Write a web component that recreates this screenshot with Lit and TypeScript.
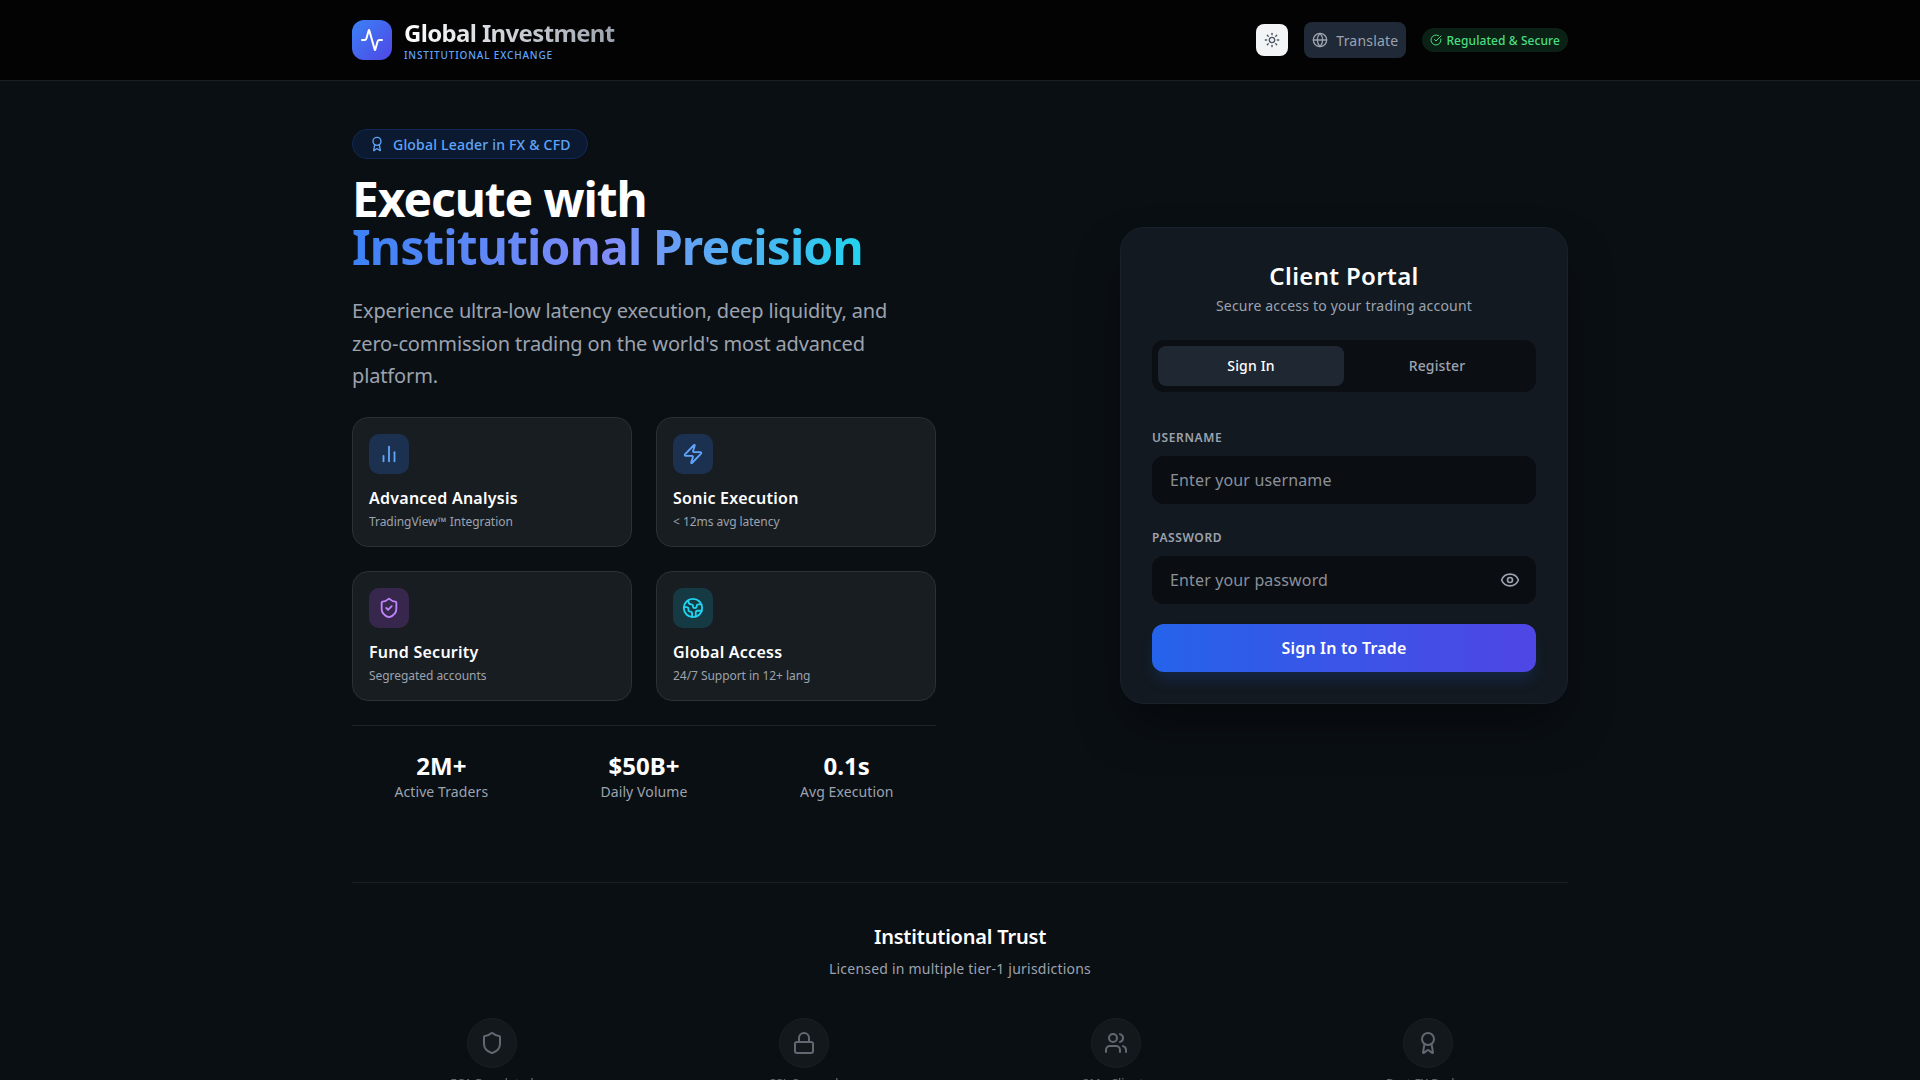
import { LitElement, html, css, svg } from "lit";
import { customElement } from "lit/decorators.js";

const ic = (size: number, body: unknown, cls = "", sw = 2) => html`<svg class=${cls} width=${size} height=${size} viewBox="0 0 24 24" fill="none" stroke="currentColor" stroke-width=${sw} stroke-linecap="round" stroke-linejoin="round">${body}</svg>`;

const I = {
  activity: svg`<path d="M22 12h-2.48a2 2 0 0 0-1.93 1.46l-2.35 8.36a.25.25 0 0 1-.48 0L9.24 2.18a.25.25 0 0 0-.48 0l-2.35 8.36A2 2 0 0 1 4.49 12H2"/>`,
  sun: svg`<circle cx="12" cy="12" r="4"/><path d="M12 2v2"/><path d="M12 20v2"/><path d="m4.93 4.93 1.41 1.41"/><path d="m17.66 17.66 1.41 1.41"/><path d="M2 12h2"/><path d="M20 12h2"/><path d="m6.34 17.66-1.41 1.41"/><path d="m19.07 4.93-1.41 1.41"/>`,
  globe: svg`<circle cx="12" cy="12" r="10"/><path d="M12 2a14.5 14.5 0 0 0 0 20 14.5 14.5 0 0 0 0-20"/><path d="M2 12h20"/>`,
  check: svg`<path d="M21.801 10A10 10 0 1 1 17 3.335"/><path d="m9 11 3 3L22 4"/>`,
  award: svg`<path d="m15.477 12.89 1.515 8.526a.5.5 0 0 1-.81.47l-3.58-2.687a1 1 0 0 0-1.197 0l-3.586 2.686a.5.5 0 0 1-.81-.469l1.514-8.526"/><circle cx="12" cy="8" r="6"/>`,
  chart: svg`<path d="M18 20V10"/><path d="M12 20V4"/><path d="M6 20v-6"/>`,
  zap: svg`<path d="M4 14a1 1 0 0 1-.78-1.63l9.9-10.2a.5.5 0 0 1 .86.46l-1.92 6.02A1 1 0 0 0 13 10h7a1 1 0 0 1 .78 1.63l-9.9 10.2a.5.5 0 0 1-.86-.46l1.92-6.02A1 1 0 0 0 11 14z"/>`,
  shieldCheck: svg`<path d="M20 13c0 5-3.5 7.5-7.66 8.95a1 1 0 0 1-.67-.01C7.5 20.5 4 18 4 13V6a1 1 0 0 1 1-1c2 0 4.5-1.2 6.24-2.72a1.17 1.17 0 0 1 1.52 0C14.51 3.81 17 5 19 5a1 1 0 0 1 1 1z"/><path d="m9 12 2 2 4-4"/>`,
  earth: svg`<path d="M21.54 15H17a2 2 0 0 0-2 2v4.54"/><path d="M7 3.34V5a3 3 0 0 0 3 3a2 2 0 0 1 2 2c0 1.1.9 2 2 2a2 2 0 0 0 2-2c0-1.1.9-2 2-2h3.17"/><path d="M11 21.95V18a2 2 0 0 0-2-2a2 2 0 0 1-2-2v-1a2 2 0 0 0-2-2H2.05"/><circle cx="12" cy="12" r="10"/>`,
  eye: svg`<path d="M2.062 12.348a1 1 0 0 1 0-.696 10.75 10.75 0 0 1 19.876 0 1 1 0 0 1 0 .696 10.75 10.75 0 0 1-19.876 0"/><circle cx="12" cy="12" r="3"/>`,
  shield: svg`<path d="M20 13c0 5-3.5 7.5-7.66 8.95a1 1 0 0 1-.67-.01C7.5 20.5 4 18 4 13V6a1 1 0 0 1 1-1c2 0 4.5-1.2 6.24-2.72a1.17 1.17 0 0 1 1.52 0C14.51 3.81 17 5 19 5a1 1 0 0 1 1 1z"/>`,
  lock: svg`<rect width="18" height="11" x="3" y="11" rx="2" ry="2"/><path d="M7 11V7a5 5 0 0 1 10 0v4"/>`,
  users: svg`<path d="M16 21v-2a4 4 0 0 0-4-4H6a4 4 0 0 0-4 4v2"/><circle cx="9" cy="7" r="4"/><path d="M22 21v-2a4 4 0 0 0-3-3.87"/><path d="M16 3.13a4 4 0 0 1 0 7.75"/>`,
};

const features = [
  { icon: I.chart, tone: "blue", title: "Advanced Analysis", sub: "TradingView™ Integration" },
  { icon: I.zap, tone: "blue", title: "Sonic Execution", sub: "< 12ms avg latency" },
  { icon: I.shieldCheck, tone: "purple", title: "Fund Security", sub: "Segregated accounts" },
  { icon: I.earth, tone: "cyan", title: "Global Access", sub: "24/7 Support in 12+ lang" },
];
const stats = [
  ["2M+", "Active Traders"],
  ["$50B+", "Daily Volume"],
  ["0.1s", "Avg Execution"],
];
const trust = [
  [I.shield, "FCA Regulated"],
  [I.lock, "SSL Secured"],
  [I.users, "2M+ Clients"],
  [I.award, "Best FX Broker"],
];

@customElement("app-root")
export class AppRoot extends LitElement {
  static styles = css`
    :host {
      display: block;
      height: 1080px;
      overflow: hidden;
      background: #0a0f14;
      color: #fff;
      font-family: "Noto Sans", sans-serif;
    }
    * { box-sizing: border-box; }
    svg { display: block; flex: none; }
    .wrap { width: 1216px; margin: 0 auto; }
    header { height: 81px; background: #030304; border-bottom: 1px solid #1c2026; }
    header .wrap { height: 80px; display: flex; align-items: center; justify-content: space-between; }
    .brand { display: flex; align-items: center; gap: 12px; }
    .logo {
      width: 40px; height: 40px; border-radius: 12px; color: #fff;
      background: linear-gradient(135deg, #3b82f6, #4f46e5);
      display: flex; align-items: center; justify-content: center;
    }
    .name {
      font-size: 24px; line-height: 28px; font-weight: 700; letter-spacing: -0.65px;
      background: linear-gradient(90deg, #fff, #9ca3af);
      -webkit-background-clip: text; background-clip: text; color: transparent;
    }
    .tag { font-size: 10px; line-height: 12px; letter-spacing: 0.83px; font-weight: 500; color: #60a5fa; margin-top: 2px; }
    .tools { display: flex; align-items: center; gap: 16px; }
    .theme {
      width: 32px; height: 32px; border: 0; padding: 0; border-radius: 8px; background: #f3f4f6; color: #4b5563;
      display: flex; align-items: center; justify-content: center;
    }
    .translate {
      height: 36px; border: 0; border-radius: 8px; padding: 0 8px; background: #1f2937; color: #9ca3af;
      display: flex; align-items: center; gap: 8px; font: 400 14px "Noto Sans", sans-serif; letter-spacing: 0.2px;
    }
    .reg {
      height: 24px; padding: 0 8px; border-radius: 999px; background: #0c2115; color: #4ade80;
      display: flex; align-items: center; gap: 4px; font-size: 12px; font-weight: 500; letter-spacing: 0.08px;
    }
    .hero { display: flex; justify-content: space-between; align-items: center; padding-top: 48px; }
    .left { width: 584px; }
    .badge {
      display: inline-flex; align-items: center; gap: 8px; height: 30px; padding: 0 16px; border-radius: 999px;
      background: #0b1a30; border: 1px solid #12295a; color: #60a5fa; font-size: 14px; font-weight: 500; letter-spacing: 0.2px;
    }
    h1 { margin: 16px 0 0; font-size: 48px; line-height: 48px; font-weight: 700; letter-spacing: -1.1px; }
    .grad {
      display: inline-block; letter-spacing: -0.87px;
      background: linear-gradient(90deg, #3b82f6, #818cf8 50%, #22d3ee);
      -webkit-background-clip: text; background-clip: text; color: transparent;
    }
    .lead { margin: 24px 0 0; font-size: 20px; line-height: 32.5px; color: #9ca3af; letter-spacing: -0.14px; }
    .features { display: grid; grid-template-columns: 1fr 1fr; gap: 24px; margin-top: 24px; }
    .feat { height: 130px; padding: 16px; border-radius: 16px; background: #181d21; border: 1px solid #2a3036; }
    .fi { width: 40px; height: 40px; border-radius: 10px; display: flex; align-items: center; justify-content: center; margin-bottom: 12px; }
    .fi.blue { background: #1c3050; color: #60a5fa; }
    .fi.purple { background: #37274c; color: #c084fc; }
    .fi.cyan { background: #163a44; color: #22d3ee; }
    .ft { font-size: 16px; line-height: 24px; font-weight: 600; letter-spacing: 0.25px; }
    .fs { font-size: 12px; line-height: 16px; color: #9ca3af; margin-top: 4px; letter-spacing: -0.05px; }
    .stats { display: grid; grid-template-columns: repeat(3, 1fr); gap: 24px; margin-top: 24px; padding-top: 24px; border-top: 1px solid #1f2429; text-align: center; }
    .sv { font-size: 24px; line-height: 32px; font-weight: 700; }
    .sl { font-size: 14px; line-height: 20px; color: #9ca3af; letter-spacing: 0.1px; }
    .portal {
      width: 448px; height: 477px; padding: 32px 31px; border-radius: 24px; background: #121920;
      border: 1px solid #18212c; box-shadow: 0 25px 50px -12px rgba(0,0,0,.5);
    }
    .portal h2 { margin: 0; text-align: center; font-size: 24px; line-height: 32px; font-weight: 600; letter-spacing: 0.35px; }
    .psub { text-align: center; font-size: 14px; line-height: 20px; color: #9ca3af; margin-top: 4px; letter-spacing: 0.2px; }
    .tabs { display: flex; height: 52px; padding: 6px; margin-top: 24px; border-radius: 12px; background: #0b0e12; }
    .tab { flex: 1; border: 0; border-radius: 8px; background: none; color: #9ca3af; font: 500 14px "Noto Sans", sans-serif; letter-spacing: 0.15px; }
    .tab.on { background: #1f2733; color: #fff; }
    label { display: block; font-size: 12px; line-height: 16px; font-weight: 600; letter-spacing: 0.6px; color: #9ca3af; margin-bottom: 10px; }
    .f1 { margin-top: 38px; }
    .f2 { margin-top: 26px; }
    .field { height: 48px; display: flex; align-items: center; border-radius: 12px; background: #0a0d11; color: #9ca3af; padding-right: 16px; }
    input {
      flex: 1; min-width: 0; height: 100%; padding: 0 0 0 18px; border: 0; outline: 0; background: none; color: #fff;
      font: 400 16px "Noto Sans", sans-serif; letter-spacing: 0.14px;
    }
    input::placeholder { color: #8a909a; opacity: 1; }
    .submit {
      display: block; width: 100%; height: 48px; margin-top: 20px; border: 0; border-radius: 12px; color: #fff;
      background: linear-gradient(90deg, #2563eb, #4f46e5);
      box-shadow: 0 10px 15px -3px rgba(37,99,235,.2);
      font: 600 16px "Noto Sans", sans-serif; letter-spacing: 0.17px;
    }
    .trust { margin-top: 80px; border-top: 1px solid #1a1f24; padding-top: 40px; text-align: center; }
    .trust h3 { margin: 0; font-size: 20px; line-height: 28px; font-weight: 600; letter-spacing: -0.2px; }
    .tsub { font-size: 14px; line-height: 20px; color: #9ca3af; margin-top: 8px; letter-spacing: 0.22px; }
    .tgrid { display: grid; grid-template-columns: repeat(4, 1fr); gap: 32px; margin-top: 39px; }
    .titem { display: flex; flex-direction: column; align-items: center; gap: 8px; opacity: .6; }
    .circle { width: 50px; height: 50px; border-radius: 50%; background: #1a1f24; border: 1px solid #252a30; color: #9ca3af; display: flex; align-items: center; justify-content: center; }
    .tl { font-size: 12px; line-height: 16px; color: #9ca3af; font-weight: 500; }
  `;

  render() {
    return html`
      <header>
        <div class="wrap">
          <div class="brand">
            <div class="logo">${ic(24, I.activity)}</div>
            <div>
              <div class="name">Global Investment</div>
              <div class="tag">INSTITUTIONAL EXCHANGE</div>
            </div>
          </div>
          <div class="tools">
            <button class="theme">${ic(16, I.sun)}</button>
            <button class="translate">${ic(16, I.globe)}Translate</button>
            <div class="reg">${ic(12, I.check)}Regulated &amp; Secure</div>
          </div>
        </div>
      </header>
      <main class="wrap">
        <section class="hero">
          <div class="left">
            <div class="badge">${ic(16, I.award)}Global Leader in FX &amp; CFD</div>
            <h1>Execute with<br /><span class="grad">Institutional Precision</span></h1>
            <p class="lead">Experience ultra-low latency execution, deep liquidity, and zero-commission trading on the world's most advanced platform.</p>
            <div class="features">
              ${features.map(
                (f) => html`<div class="feat">
                  <div class="fi ${f.tone}">${ic(22, f.icon)}</div>
                  <div class="ft">${f.title}</div>
                  <div class="fs">${f.sub}</div>
                </div>`
              )}
            </div>
            <div class="stats">
              ${stats.map(([v, l]) => html`<div><div class="sv">${v}</div><div class="sl">${l}</div></div>`)}
            </div>
          </div>
          <div class="portal">
            <h2>Client Portal</h2>
            <div class="psub">Secure access to your trading account</div>
            <div class="tabs">
              <button class="tab on">Sign In</button>
              <button class="tab">Register</button>
            </div>
            <div class="f1">
              <label>USERNAME</label>
              <div class="field"><input placeholder="Enter your username" /></div>
            </div>
            <div class="f2">
              <label>PASSWORD</label>
              <div class="field"><input type="password" placeholder="Enter your password" />${ic(20, I.eye)}</div>
            </div>
            <button class="submit">Sign In to Trade</button>
          </div>
        </section>
        <section class="trust">
          <h3>Institutional Trust</h3>
          <div class="tsub">Licensed in multiple tier-1 jurisdictions</div>
          <div class="tgrid">
            ${trust.map(([i, l]) => html`<div class="titem"><div class="circle">${ic(24, i)}</div><div class="tl">${l}</div></div>`)}
          </div>
        </section>
      </main>
    `;
  }
}
